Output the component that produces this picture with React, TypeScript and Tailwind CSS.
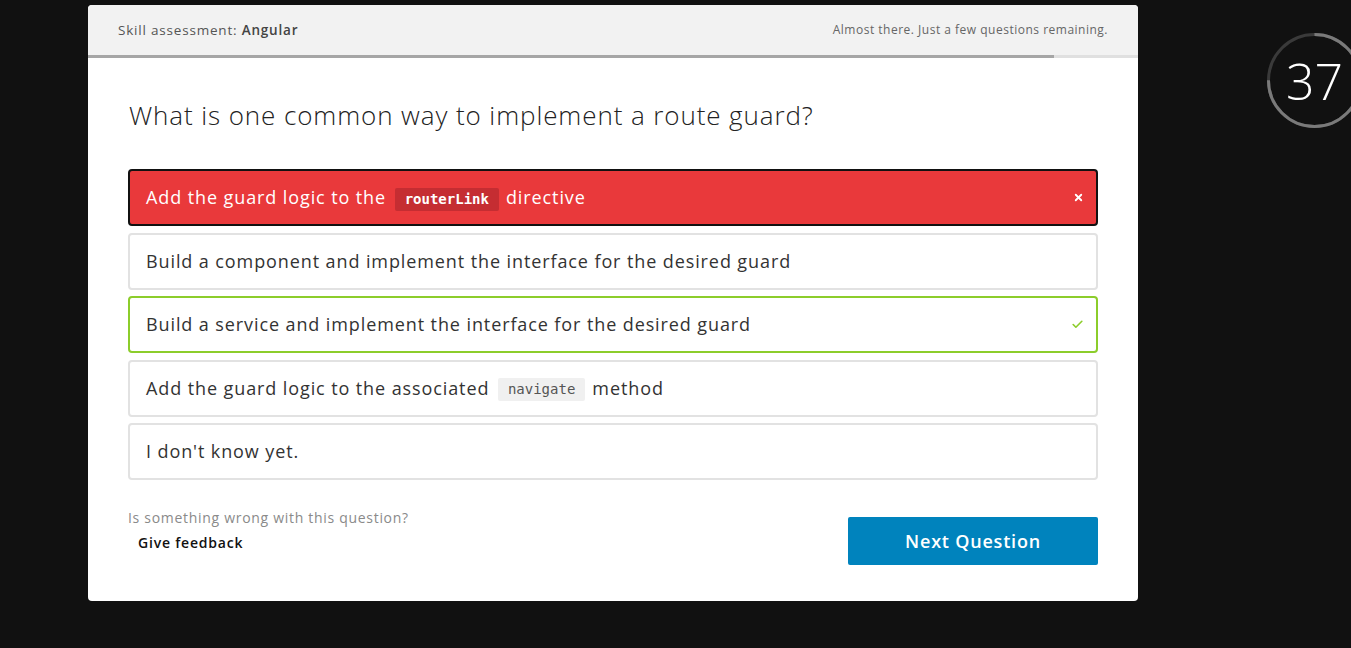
import { Check, X } from 'lucide-react'

const options = [
  { id: 'a', before: 'Add the guard logic to the ', code: 'routerLink', after: ' directive', state: 'wrong' },
  { id: 'b', before: 'Build a component and implement the interface for the desired guard', state: 'none' },
  { id: 'c', before: 'Build a service and implement the interface for the desired guard', state: 'right' },
  { id: 'd', before: 'Add the guard logic to the associated ', code: 'navigate', after: ' method', state: 'none' },
  { id: 'e', before: "I don't know yet.", state: 'none' },
]

function Timer() {
  const r = 46
  const c = 2 * Math.PI * r
  return (
    <div className="relative mt-[33px] ml-[129px] w-[95px] h-[95px] shrink-0">
      <svg width="95" height="95" viewBox="0 0 95 95" className="absolute inset-0">
        <circle cx="47.5" cy="47.5" r={r} fill="none" stroke="#3a3a3a" strokeWidth="3" />
        {/* remaining time arc, clockwise from 12 o'clock */}
        <circle
          cx="47.5"
          cy="47.5"
          r={r}
          fill="none"
          stroke="#7a7a7a"
          strokeWidth="3"
          strokeDasharray={`${c * 0.75} ${c}`}
          transform="rotate(-90 47.5 47.5)"
        />
      </svg>
      <div className="absolute inset-0 flex items-center justify-center text-white text-[50px] font-light leading-none">
        37
      </div>
    </div>
  )
}

export default function App() {
  return (
    <div className="w-full h-[648px] bg-[#111111] overflow-hidden font-['Open_Sans',sans-serif]">
      <div className="flex items-start">
        <div className="ml-[88px] mt-[5px] w-[1050px] shrink-0 bg-white rounded-[4px] overflow-hidden">
          {/* Header */}
          <div className="h-[50px] bg-[#f2f2f2] px-[30px] flex items-center justify-between">
            <span className="text-[13.5px] text-[#555] tracking-[0.8px]">
              Skill assessment: <span className="font-semibold text-[#444]">Angular</span>
            </span>
            <span className="text-[12px] text-[#666] tracking-[0.5px]">Almost there. Just a few questions remaining.</span>
          </div>
          <div className="h-[3px] bg-[#e0e0e0]">
            <div className="h-full w-[92%] bg-[#a6a6a6]" />
          </div>

          {/* Body */}
          <div className="px-[40px] pt-[41px] pb-[36px]">
            <h1 className="text-[26px] leading-[32px] font-light text-[#222] pl-px tracking-[0.9px]">
              What is one common way to implement a route guard?
            </h1>

            <div className="mt-[38px] flex flex-col gap-[6.5px]">
              {options.map((o) => {
                const wrong = o.state === 'wrong'
                const right = o.state === 'right'
                return (
                  <div
                    key={o.id}
                    className={`h-[57px] rounded-[4px] border-2 flex items-center justify-between pl-[16px] pr-[12px] text-[18px] tracking-[0.9px] ${
                      wrong
                        ? 'bg-[#e9393b] border-[#111] text-white'
                        : right
                          ? 'bg-white border-[#8ccd2b] text-[#333]'
                          : 'bg-white border-[#e2e2e2] text-[#333]'
                    }`}
                  >
                    <span className="whitespace-pre">
                      {o.before}
                      {o.code && (
                        <code
                          className={`inline-block ml-[3px] mr-[7px] px-[10px] py-[1px] rounded-[2px] text-[14px] tracking-normal font-['DejaVu_Sans_Mono',monospace] align-middle ${
                            wrong ? 'bg-[#c52d32] text-white font-bold' : 'bg-[#f0f0f0] text-[#555]'
                          }`}
                        >
                          {o.code}
                        </code>
                      )}
                      {o.after && o.after.trimStart()}
                    </span>
                    {wrong && <X className="w-[11px] h-[11px] text-white" strokeWidth={4} />}
                    {right && <Check className="w-[13px] h-[13px] text-[#8ccd2b]" strokeWidth={3} />}
                  </div>
                )
              })}
            </div>

            {/* Footer */}
            <div className="mt-[29px] flex items-start justify-between">
              <div>
                <p className="text-[14px] text-[#8a8a8a] leading-[18px] tracking-[0.7px]">
                  Is something wrong with this question?
                </p>
                <button className="mt-[7px] ml-[10px] text-[14px] font-semibold text-[#111] leading-[18px] tracking-[0.8px]">
                  Give feedback
                </button>
              </div>
              <button className="mt-[8px] w-[250px] h-[48px] rounded-[2px] bg-[#0083bd] text-white text-[18px] font-semibold tracking-[0.8px]">
                Next Question
              </button>
            </div>
          </div>
        </div>
        <Timer />
      </div>
    </div>
  )
}
